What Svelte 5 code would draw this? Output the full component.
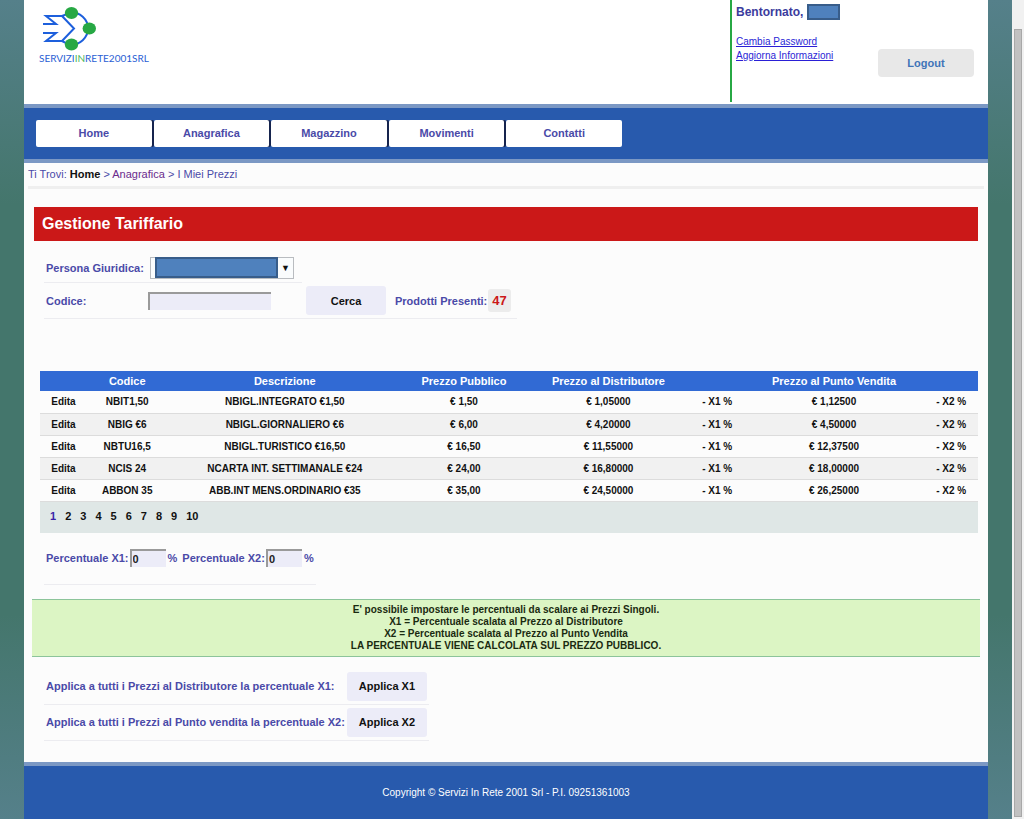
<script>
    const menu = ["Home", "Anagrafica", "Magazzino", "Movimenti", "Contatti"];

    const prodotti = [
        { codice: "NBIT1,50", desc: "NBIGL.INTEGRATO €1,50", pubblico: "1,50", distributore: "1,05000", vendita: "1,12500" },
        { codice: "NBIG €6", desc: "NBIGL.GIORNALIERO €6", pubblico: "6,00", distributore: "4,20000", vendita: "4,50000" },
        { codice: "NBTU16,5", desc: "NBIGL.TURISTICO €16,50", pubblico: "16,50", distributore: "11,55000", vendita: "12,37500" },
        { codice: "NCIS 24", desc: "NCARTA INT. SETTIMANALE €24", pubblico: "24,00", distributore: "16,80000", vendita: "18,00000" },
        { codice: "ABBON 35", desc: "ABB.INT MENS.ORDINARIO €35", pubblico: "35,00", distributore: "24,50000", vendita: "26,25000" },
    ];

    const pagine = [2, 3, 4, 5, 6, 7, 8, 9, 10];

    let codice = "";
    let x1 = "0";
    let x2 = "0";
</script>

<div class="window">
    <div class="page">
        <header class="top">
            <div class="logo">
                <svg width="58" height="45" viewBox="0 0 58 45" aria-hidden="true">
                    <path d="M31 5 A18 16.5 0 0 1 31 38" fill="none" stroke="#1d5fdc" stroke-width="2" />
                    <path
                        d="M31 6 L23 9 H7 L17 17 H4 M4 26 H17 L7 34 H23 L31 38 M23 9 L35 21.5 L23 34"
                        fill="none"
                        stroke="#1d5fdc"
                        stroke-width="2"
                    />
                    <ellipse cx="32.5" cy="6" rx="6.7" ry="6" fill="#27a844" />
                    <ellipse cx="50.3" cy="21.5" rx="6.7" ry="6" fill="#27a844" />
                    <ellipse cx="32.5" cy="37.5" rx="6.7" ry="6" fill="#27a844" />
                </svg>
                <div class="logo-text">SERVIZI<span>IN</span>RETE2001SRL</div>
            </div>
            <div class="user">
                <div class="user-info">
                    <div class="welcome">Bentornato, <span class="user-name"></span></div>
                    <a href="#password">Cambia Password</a>
                    <a href="#informazioni">Aggiorna Informazioni</a>
                </div>
                <button class="logout">Logout</button>
            </div>
        </header>

        <nav class="menu">
            {#each menu as voce}
                <a href="#{voce}">{voce}</a>
            {/each}
        </nav>

        <div class="crumbs">
            Ti Trovi: <a class="home" href="#Home">Home</a> &gt;
            <a href="#Anagrafica">Anagrafica</a> &gt; I Miei Prezzi
        </div>

        <main>
            <h1>Gestione Tariffario</h1>

            <!-- Filtri -->
            <form class="filters">
                <div class="filter-row first">
                    <label for="persona">Persona Giuridica:</label>
                    <div class="select-box">
                        <select id="persona"><option></option></select>
                        <span class="mask"></span>
                        <span class="arrow">▼</span>
                    </div>
                </div>
                <div class="filter-row second">
                    <label for="codice">Codice:</label>
                    <input id="codice" class="inset" type="text" bind:value={codice} />
                    <button class="btn" type="button">Cerca</button>
                    <span class="count-label">Prodotti Presenti:</span>
                    <span class="count">47</span>
                </div>
            </form>

            <!-- Griglia prezzi -->
            <table>
                <colgroup>
                    <col class="c-edit" />
                    <col class="c-code" />
                    <col class="c-desc" />
                    <col class="c-pub" />
                    <col class="c-dist" />
                    <col class="c-x1" />
                    <col class="c-vend" />
                    <col class="c-x2" />
                </colgroup>
                <thead>
                    <tr>
                        <th></th>
                        <th>Codice</th>
                        <th>Descrizione</th>
                        <th>Prezzo Pubblico</th>
                        <th>Prezzo al Distributore</th>
                        <th></th>
                        <th>Prezzo al Punto Vendita</th>
                        <th></th>
                    </tr>
                </thead>
                <tbody>
                    {#each prodotti as p}
                        <tr>
                            <td><a href="#edita">Edita</a></td>
                            <td>{p.codice}</td>
                            <td>{p.desc}</td>
                            <td>€ {p.pubblico}</td>
                            <td>€ {p.distributore}</td>
                            <td>- X1 %</td>
                            <td>€ {p.vendita}</td>
                            <td>- X2 %</td>
                        </tr>
                    {/each}
                </tbody>
            </table>
            <div class="pager">
                <span>1</span>
                {#each pagine as n}
                    <a href="#p{n}">{n}</a>
                {/each}
            </div>

            <div class="percent">
                <label for="x1">Percentuale X1:</label>
                <input id="x1" class="inset" type="text" bind:value={x1} />
                <span class="unit">%</span>
                <label for="x2">Percentuale X2:</label>
                <input id="x2" class="inset" type="text" bind:value={x2} />
                <span class="unit">%</span>
            </div>

            <div class="note">
                E' possibile impostare le percentuali da scalare ai Prezzi Singoli.<br />
                X1 = Percentuale scalata al Prezzo al Distributore<br />
                X2 = Percentuale scalata al Prezzo al Punto Vendita<br />
                LA PERCENTUALE VIENE CALCOLATA SUL PREZZO PUBBLICO.
            </div>

            <div class="apply">
                <div class="apply-row">
                    <span>Applica a tutti i Prezzi al Distributore la percentuale X1:</span>
                    <button class="btn">Applica X1</button>
                </div>
                <div class="apply-row">
                    <span>Applica a tutti i Prezzi al Punto vendita la percentuale X2:</span>
                    <button class="btn">Applica X2</button>
                </div>
            </div>
        </main>

        <footer>Copyright © Servizi In Rete 2001 Srl - P.I. 09251361003</footer>
    </div>
    <div class="scroll"><div class="thumb"></div></div>
</div>

<style>
    :global(body) {
        font-family: "Liberation Sans", Arial, sans-serif;
        font-size: 11px;
        color: #4a4aa8;
    }

    .window {
        display: flex;
        min-height: 100vh;
        background: linear-gradient(#55808a, #44766c 25%, #44766c 75%, #55808a);
    }

    .page {
        flex: 1;
        display: flex;
        flex-direction: column;
        margin: 0 24px;
        background: #fcfcfc;
    }

    .scroll {
        width: 12px;
        box-sizing: border-box;
        padding: 29px 2px 2px;
        background: #f1f1f1;
        display: flex;
    }
    .thumb {
        flex: 1;
        box-sizing: border-box;
        background: #c1c1c1;
        border: 1px solid #a8a8a8;
    }

    /* Testata */
    .top {
        display: flex;
        justify-content: space-between;
        height: 104px;
        background: #fff;
    }
    .logo {
        padding: 7px 0 0 15px;
    }
    .logo svg {
        display: block;
    }
    .logo-text {
        font-family: Lato, sans-serif;
        font-size: 10px;
        line-height: 12px;
        color: #2a60d4;
    }
    .logo-text span {
        color: #4db85c;
    }
    .user {
        display: flex;
        justify-content: space-between;
        align-items: flex-start;
        box-sizing: border-box;
        width: 258px;
        height: 102px;
        padding: 4px 14px 0 4px;
        border-left: 2px solid #27a844;
    }
    .user-info {
        display: flex;
        flex-direction: column;
        line-height: 14px;
    }
    .user-info a {
        color: #2a1fd6;
        font-size: 10px;
    }
    .welcome {
        display: flex;
        align-items: center;
        gap: 4px;
        height: 16px;
        margin-bottom: 15px;
        font-size: 12px;
        font-weight: bold;
        color: #3b3b9d;
    }
    .user-name {
        box-sizing: border-box;
        width: 33px;
        height: 16px;
        background: #4f81bd;
        border: 2px solid #385d8a;
    }
    .logout {
        width: 96px;
        height: 28px;
        margin-top: 45px;
        border: 0;
        border-radius: 4px;
        background: #e8e8e8;
        color: #3f74b8;
        font: bold 11px "Liberation Sans", Arial, sans-serif;
    }

    /* Menu */
    .menu {
        display: grid;
        grid-template-columns: repeat(5, 1fr);
        gap: 2px;
        padding: 12px 366px 12px 12px;
        background: #285aad;
        border-top: 4px solid #7b98c4;
        border-bottom: 4px solid #7b98c4;
    }
    .menu a {
        line-height: 27px;
        background: #fff;
        border-radius: 2px;
        color: #4a4aa8;
        font-weight: bold;
        text-align: center;
        text-decoration: none;
    }
    .menu a:not(:last-child) {
        box-shadow: 2px 0 #16244e;
    }

    .crumbs {
        margin: 0 4px;
        padding: 3px 0 4px;
        line-height: 16px;
        border-bottom: 3px solid #efefef;
    }
    .crumbs a {
        color: #6a2a8c;
        text-decoration: none;
    }
    .crumbs a.home {
        color: #111;
        font-weight: bold;
    }

    main {
        padding: 18px 8px 21px;
    }
    h1 {
        margin: 0 2px;
        padding: 0 8px;
        background: #cb1818;
        color: #fff;
        font-size: 16px;
        line-height: 34px;
    }

    /* Filtri */
    .filters {
        margin: 13px 12px 0;
        font-weight: bold;
    }
    .filter-row {
        display: flex;
        align-items: center;
        box-sizing: border-box;
        width: fit-content;
        padding: 0 2px;
        border-bottom: 1px solid #ececf0;
    }
    .filter-row label {
        width: 102px;
    }
    .first {
        height: 29px;
        width: 258px;
    }
    .second {
        height: 36px;
        padding-right: 6px;
    }
    .first .select-box {
        margin-left: 2px;
    }
    .select-box {
        position: relative;
        width: 144px;
        height: 22px;
    }
    .select-box select {
        width: 100%;
        height: 100%;
        appearance: none;
        background: #fafcfd;
        border: 1px solid #b9bcc0;
    }
    .mask {
        position: absolute;
        left: 5px;
        top: 0;
        box-sizing: border-box;
        width: 123px;
        height: 21px;
        background: #4f81bd;
        border: 2px solid #385d8a;
        pointer-events: none;
    }
    .arrow {
        position: absolute;
        right: 4px;
        top: 5px;
        color: #111;
        font-size: 9px;
        line-height: 12px;
        pointer-events: none;
    }
    .inset {
        box-sizing: border-box;
        height: 18px;
        padding: 0 1px;
        border: 0;
        border-top: 2px solid #9a9a9a;
        border-left: 2px solid #9a9a9a;
        background: #ececf8;
        color: #222;
        font: bold 11px "Liberation Sans", Arial, sans-serif;
    }
    .second .inset {
        width: 123px;
    }
    .btn {
        width: 80px;
        height: 29px;
        padding: 0;
        border: 0;
        border-radius: 3px;
        background: #ececf8;
        color: #111;
        font: bold 11px "Liberation Sans", Arial, sans-serif;
    }
    .second .btn {
        margin: 0 9px 0 35px;
    }
    .count {
        margin-left: 1px;
        padding: 0 4px;
        background: #ececec;
        border-radius: 3px;
        color: #cb1818;
        font-size: 13px;
        line-height: 23px;
    }

    /* Griglia */
    table {
        width: calc(100% - 10px);
        margin: 52px 2px 0 8px;
        border-collapse: collapse;
        table-layout: fixed;
        color: #111;
        font-weight: bold;
        text-align: center;
    }
    .c-edit { width: 5%; }
    .c-code { width: 8.6%; }
    .c-desc { width: 25%; }
    .c-pub { width: 13.2%; }
    .c-dist { width: 17.6%; }
    .c-x1 { width: 5.6%; }
    .c-vend { width: 19.3%; }
    .c-x2 { width: 5.7%; }
    th {
        height: 20px;
        padding: 0;
        background: #316ad4;
        color: #fff;
    }
    td {
        box-sizing: border-box;
        height: 22px;
        padding: 0;
        border-bottom: 1px solid #dcdcdc;
        font-size: 10px;
    }
    tbody tr:nth-child(even) {
        background: #f1f1f1;
    }
    td a {
        color: #111;
        text-decoration: none;
    }
    .pager {
        display: flex;
        gap: 9px;
        margin: 0 2px 0 8px;
        padding: 0 10px 2px;
        background: #dfe7e6;
        font-weight: bold;
        line-height: 29px;
    }
    .pager span {
        color: #3a1fa8;
    }
    .pager a {
        color: #111;
        text-decoration: none;
    }

    .percent {
        display: flex;
        align-items: center;
        width: fit-content;
        margin: 16px 12px 14px;
        padding: 0 2px 17px;
        border-bottom: 1px solid #ececf0;
        font-weight: bold;
    }
    .percent .inset {
        width: 36px;
        margin-left: 1px;
    }
    .unit {
        margin-left: 2px;
    }
    .unit + label {
        margin-left: 5px;
    }

    .note {
        padding: 4px 0;
        background: #dcf5c4;
        border-top: 1px solid #8cc49a;
        border-bottom: 1px solid #8cc49a;
        color: #1a2a10;
        font-size: 10px;
        font-weight: bold;
        line-height: 12px;
        text-align: center;
    }

    .apply {
        width: fit-content;
        margin: 12px 12px 0;
        font-weight: bold;
    }
    .apply-row {
        display: flex;
        justify-content: space-between;
        align-items: center;
        gap: 2px;
        height: 35px;
        padding: 0 2px;
        border-bottom: 1px solid #ececf0;
    }

    footer {
        flex: 1;
        display: flex;
        align-items: center;
        justify-content: center;
        background: #285aad;
        border-top: 4px solid #7b98c4;
        color: #fff;
        font-size: 10px;
    }
</style>
